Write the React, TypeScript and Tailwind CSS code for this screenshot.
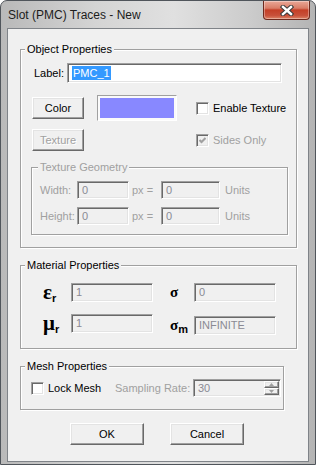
import React from 'react'

const raised =
  "border border-t-white border-l-white border-r-[#696969] border-b-[#696969] shadow-[inset_-1px_-1px_0_#a0a0a0,inset_1px_1px_0_#e3e3e3] bg-[#f0f0f0]"
const sunken =
  "border border-t-[#a0a0a0] border-l-[#a0a0a0] border-r-white border-b-white shadow-[inset_1px_1px_0_#696969,inset_-1px_-1px_0_#e3e3e3]"
const group =
  "border border-[#a0a0a0] shadow-[1px_1px_0_#ffffff,inset_1px_1px_0_#ffffff]"

function Check({ checked, disabled }: { checked?: boolean; disabled?: boolean }) {
  return (
    <span
      className={`w-[13px] h-[13px] shrink-0 flex items-center justify-center ${sunken} ${disabled ? 'bg-[#f0f0f0]' : 'bg-white'}`}
    >
      {checked && (
        <svg width="7" height="7" viewBox="0 0 7 7">
          <polyline points="0.5,3 2.5,5 6.5,1" fill="none" stroke={disabled ? '#a0a0a0' : '#000'} strokeWidth="2" />
        </svg>
      )}
    </span>
  )
}

function Field({ w, h, value }: { w: string; h: string; value: string }) {
  return (
    <div className={`${w} ${h} ${sunken} bg-[#f0f0f0] flex items-center pl-[4px] text-[#8a8a94]`}>
      {value}
    </div>
  )
}

function Sym({ ch, sub, big }: { ch: string; sub: string; big?: boolean }) {
  return (
    <span className="flex items-baseline font-bold leading-none">
      <span className={`font-['Liberation_Serif',serif] ${big ? 'text-[21px]' : 'text-[15px]'}`}>{ch}</span>
      <span className="text-[11px] translate-y-[3px]">{sub}</span>
    </span>
  )
}

function CloseButton() {
  return (
    <div className="w-[47px] h-[19px] rounded-b-[4px] border border-t-0 border-[#6e2a1e] bg-[linear-gradient(180deg,#e9a898_0%,#d97d67_40%,#c43f27_50%,#c8503a_80%,#dc8466_100%)] shadow-[inset_0_0_0_1px_rgba(255,255,255,0.35)] flex items-center justify-center">
      <svg width="14" height="11" viewBox="0 0 14 11">
        <path d="M3 2 L11 9 M11 2 L3 9" stroke="#3b3b3b" strokeWidth="4.5" strokeLinecap="square" />
        <path d="M3 2 L11 9 M11 2 L3 9" stroke="#ffffff" strokeWidth="2.4" strokeLinecap="square" />
      </svg>
    </div>
  )
}

export default function App() {
  return (
    <div className="w-[316px] h-[465px] flex flex-col rounded-t-[7px] border border-[#50555b] bg-[linear-gradient(90deg,#b9b9b9_0%,#d4d4d4_30%,#e0e0e0_55%,#cbcbcb_80%,#b4b4b4_100%)] font-['Liberation_Sans',Arial,sans-serif] text-[11px] leading-[13px] text-black overflow-hidden">
      {/* title bar */}
      <div className="h-[27px] shrink-0 flex items-start justify-between pl-[7px] pr-[5px]">
        <div className="pt-[7px] text-[12px] leading-[14px] text-[#1c1c1c]">Slot (PMC) Traces - New</div>
        <CloseButton />
      </div>

      {/* client area */}
      <div className="mx-[6px] flex-1 border border-[#7f8388] bg-[#f0f0f0] flex flex-col">
        <fieldset className={`ml-[12px] mt-[14px] w-[277px] pt-[7px] pb-[12px] ${group}`}>
          <legend className="ml-[4px] px-[2px] leading-[13px] bg-[#f0f0f0]">Object Properties</legend>

          <div className="flex items-center pl-[13px]">
            <span className="w-[33px]">Label:</span>
            <div className={`w-[215px] h-[20px] ${sunken} bg-white flex items-center pl-[4px]`}>
              <span className="bg-[#3399ff] text-white px-[1px] leading-[14px]">PMC_1</span>
            </div>
          </div>

          <div className="flex items-center pl-[11px] mt-[12px] h-[26px]">
            <div className={`w-[52px] h-[22px] ${raised} flex items-center justify-center`}>Color</div>
            <div className="ml-[13px] w-[80px] h-[26px] border border-t-[#a0a0a0] border-l-[#a0a0a0] border-r-white border-b-white p-[2px] bg-[#fafafa]">
              <div className="w-full h-full bg-[#8888ff]" />
            </div>
            <div className="ml-[19px]">
              <Check />
            </div>
            <span className="ml-[4px]">Enable Texture</span>
          </div>

          <div className="flex items-center pl-[11px] mt-[8px] h-[22px]">
            <div className={`w-[52px] h-[22px] ${raised} flex items-center justify-center text-[#a0a0a0] [text-shadow:1px_1px_0_#fff]`}>
              Texture
            </div>
            <div className="ml-[112px]">
              <Check checked disabled />
            </div>
            <span className="ml-[4px] text-[#a0a0a0]">Sides Only</span>
          </div>

          <fieldset className={`ml-[10px] mt-[10px] w-[257px] pt-[7px] pb-[9px] ${group} text-[#a0a0a0]`}>
            <legend className="ml-[6px] px-[2px] leading-[13px] bg-[#f0f0f0]">Texture Geometry</legend>
            <div className="flex items-center pl-[8px] h-[18px]">
              <span className="w-[37px]">Width:</span>
              <Field w="w-[52px]" h="h-[18px]" value="0" />
              <span className="ml-[3px] w-[29px]">px =</span>
              <Field w="w-[59px]" h="h-[18px]" value="0" />
              <span className="ml-[5px]">Units</span>
            </div>
            <div className="flex items-center pl-[8px] h-[18px] mt-[8px]">
              <span className="w-[37px]">Height:</span>
              <Field w="w-[52px]" h="h-[18px]" value="0" />
              <span className="ml-[3px] w-[29px]">px =</span>
              <Field w="w-[59px]" h="h-[18px]" value="0" />
              <span className="ml-[5px]">Units</span>
            </div>
          </fieldset>
        </fieldset>

        <fieldset className={`ml-[12px] mt-[11px] w-[277px] pt-[11px] pb-[15px] ${group}`}>
          <legend className="ml-[4px] px-[2px] leading-[13px] bg-[#f0f0f0]">Material Properties</legend>
          <div className="flex items-center pl-[22px] h-[19px]">
            <span className="w-[28px]">
              <Sym ch="ε" sub="r" big />
            </span>
            <Field w="w-[82px]" h="h-[19px]" value="1" />
            <span className="ml-[17px] w-[24px]">
              <Sym ch="σ" sub="" />
            </span>
            <Field w="w-[82px]" h="h-[19px]" value="0" />
          </div>
          <div className="flex items-center pl-[22px] h-[19px] mt-[12px]">
            <span className="w-[28px]">
              <Sym ch="μ" sub="r" big />
            </span>
            <Field w="w-[82px]" h="h-[19px]" value="1" />
            <span className="ml-[17px] w-[24px] mt-[4px]">
              <Sym ch="σ" sub="m" />
            </span>
            <div className="mt-[4px]">
              <Field w="w-[82px]" h="h-[19px]" value="INFINITE" />
            </div>
          </div>
        </fieldset>

        <fieldset className={`ml-[12px] mt-[11px] w-[264px] pt-[6px] pb-[12px] ${group}`}>
          <legend className="ml-[4px] px-[2px] leading-[13px] bg-[#f0f0f0]">Mesh Properties</legend>
          <div className="flex items-center pl-[10px] h-[18px]">
            <Check />
            <span className="ml-[4px] w-[67px]">Lock Mesh</span>
            <span className="w-[78px] text-[#a0a0a0]">Sampling Rate:</span>
            <div className={`w-[88px] h-[18px] ${sunken} bg-[#f0f0f0] flex items-center pl-[4px] pr-[1px] text-[#8a8a94]`}>
              <span className="flex-1">30</span>
              <div className="flex flex-col w-[15px] h-[14px]">
                <div className={`h-[7px] ${raised} flex items-center justify-center`}>
                  <svg width="5" height="3" viewBox="0 0 5 3">
                    <path d="M2.5 0 L5 3 L0 3 Z" fill="#a0a0a0" />
                  </svg>
                </div>
                <div className={`h-[7px] ${raised} flex items-center justify-center`}>
                  <svg width="5" height="3" viewBox="0 0 5 3">
                    <path d="M0 0 L5 0 L2.5 3 Z" fill="#a0a0a0" />
                  </svg>
                </div>
              </div>
            </div>
          </div>
        </fieldset>

        <div className="flex justify-center gap-[26px] mt-[13px] pr-[2px]">
          <div className={`w-[74px] h-[22px] ${raised} flex items-center justify-center`}>OK</div>
          <div className={`w-[74px] h-[22px] ${raised} flex items-center justify-center`}>Cancel</div>
        </div>
      </div>
      <div className="h-[2px] shrink-0" />
    </div>
  )
}
